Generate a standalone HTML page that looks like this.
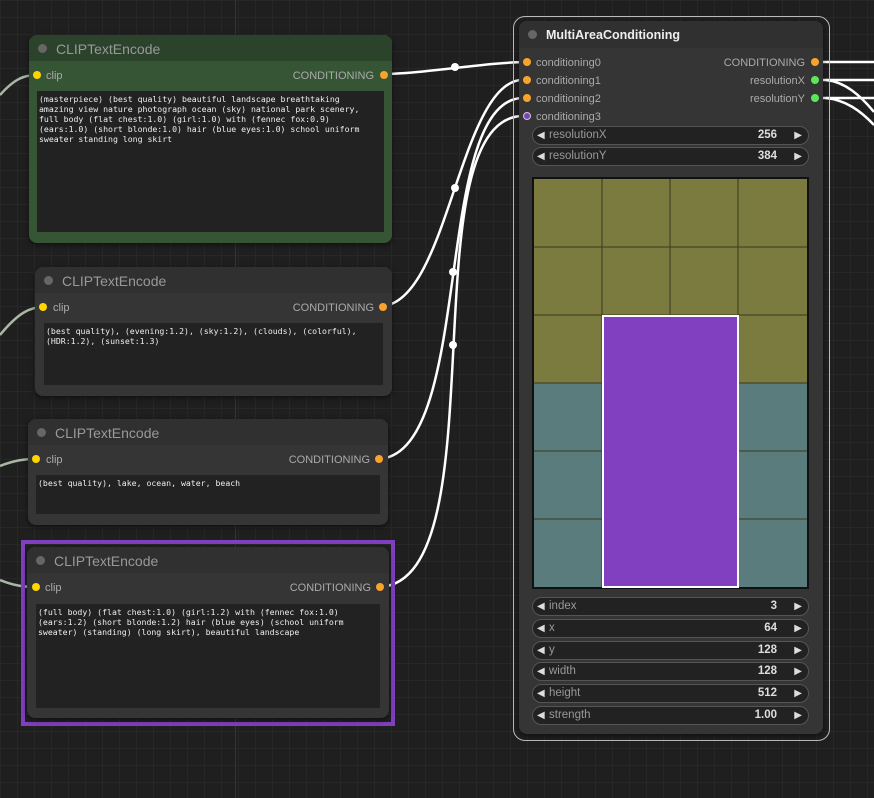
<!DOCTYPE html>
<html><head><meta charset="utf-8"><style>
*{margin:0;padding:0;box-sizing:border-box}
body{width:874px;height:798px;overflow:hidden;position:relative;background:#1f1f1f;
background-image:linear-gradient(#272727 1px,transparent 1px),linear-gradient(90deg,#272727 1px,transparent 1px);
background-size:17px 17px;font-family:"Liberation Sans",Arial,sans-serif}
.abs{position:absolute}
.node{position:absolute;border-radius:8px;background:#353535;box-shadow:0 2px 6px rgba(0,0,0,.5)}
.title{position:absolute;left:0;right:0;top:0;height:26px;background:#303030;border-radius:8px 8px 0 0;color:#999;font-size:14px;line-height:28px;padding-left:27px}
.title:before{content:"";position:absolute;left:9px;top:9px;width:9px;height:9px;border-radius:50%;background:#666}
.slot{position:absolute;font-size:11px;color:#aaa;line-height:12px}
.dot{position:absolute;width:8px;height:8px;border-radius:50%}
.ta{position:absolute;background:#222;color:#eee;font-family:"DejaVu Sans Mono","Liberation Mono",monospace;font-size:8.2px;line-height:10px;padding:3px 2px;white-space:pre}
.w{position:absolute;left:13px;width:277px;height:19px;border:1px solid #555;border-radius:10px;background:#222;color:#999;font-size:11.5px;line-height:17px;padding-left:16px}
.w:before{content:"◀";position:absolute;left:4px;color:#ddd;font-size:10px}
.w:after{content:"▶";position:absolute;right:6px;top:0;color:#ddd;font-size:10px}
.w b{position:absolute;right:31px;color:#ddd;font-weight:bold}
</style></head><body>
<div class="abs" style="left:235px;top:0;width:1px;height:798px;background:#2a3260"></div>

<svg class="abs" style="left:0;top:0" width="874" height="798">
<g fill="none" stroke="#a9b7a5" stroke-width="2.5">
<path d="M0,95 C15,78 25,75 37,75"/>
<path d="M0,335 C18,313 30,307 43,307"/>
<path d="M0,466 C15,460 25,459 36,459"/>
<path d="M0,580 C15,586 25,587 36,587"/>
</g>
<g fill="none" stroke="#fff" stroke-width="2.5">
<path d="M383,74 C420,74 490,62 527,62"/>
<path d="M383,306 C450,300 460,72 527,80"/>
<path d="M380,459 C477,450 430,90 527,98"/>
<path d="M380,587 C503,580 404,108 527,116"/>
<path d="M815,62 L874,62"/>
<path d="M815,80 L874,80"/>
<path d="M815,98 L874,98"/>
<path d="M826,80 C845,82 860,95 874,112"/>
<path d="M826,98 C845,100 860,110 874,125"/>
</g>
<g fill="#fff"><circle cx="455" cy="67" r="4"/><circle cx="455" cy="188" r="4"/><circle cx="453" cy="272" r="4"/><circle cx="453" cy="345" r="4"/></g>
</svg>

<div class="node" style="left:29px;top:35px;width:363px;height:208px;background:#355535">
<div class="title" style="background:#2b422b">CLIPTextEncode</div>
<div class="dot" style="left:4px;top:36px;background:#ffd500"></div>
<div class="slot" style="left:17px;top:35px">clip</div>
<div class="slot" style="right:18px;top:35px">CONDITIONING</div>
<div class="dot" style="right:4px;top:36px;background:#f9a32c"></div>
<div class="ta" style="left:8px;top:56px;width:347px;height:141px">(masterpiece) (best quality) beautiful landscape breathtaking
amazing view nature photograph ocean (sky) national park scenery,
full body (flat chest:1.0) (girl:1.0) with (fennec fox:0.9)
(ears:1.0) (short blonde:1.0) hair (blue eyes:1.0) school uniform
sweater standing long skirt</div>
</div>

<div class="node" style="left:35px;top:267px;width:357px;height:129px">
<div class="title">CLIPTextEncode</div>
<div class="dot" style="left:4px;top:36px;background:#ffd500"></div>
<div class="slot" style="left:18px;top:35px">clip</div>
<div class="slot" style="right:18px;top:35px">CONDITIONING</div>
<div class="dot" style="right:5px;top:36px;background:#f9a32c"></div>
<div class="ta" style="left:9px;top:56px;width:339px;height:62px">(best quality), (evening:1.2), (sky:1.2), (clouds), (colorful),
(HDR:1.2), (sunset:1.3)</div>
</div>

<div class="node" style="left:28px;top:419px;width:360px;height:106px">
<div class="title">CLIPTextEncode</div>
<div class="dot" style="left:4px;top:36px;background:#ffd500"></div>
<div class="slot" style="left:18px;top:35px">clip</div>
<div class="slot" style="right:18px;top:35px">CONDITIONING</div>
<div class="dot" style="right:5px;top:36px;background:#f9a32c"></div>
<div class="ta" style="left:8px;top:56px;width:344px;height:39px">(best quality), lake, ocean, water, beach</div>
</div>

<div class="abs" style="left:21px;top:540px;width:374px;height:186px;border:4px solid #7f3fbf"></div>
<div class="node" style="left:27px;top:547px;width:362px;height:171px">
<div class="title">CLIPTextEncode</div>
<div class="dot" style="left:5px;top:36px;background:#ffd500"></div>
<div class="slot" style="left:18px;top:35px">clip</div>
<div class="slot" style="right:18px;top:35px">CONDITIONING</div>
<div class="dot" style="right:5px;top:36px;background:#f9a32c"></div>
<div class="ta" style="left:9px;top:57px;width:344px;height:104px">(full body) (flat chest:1.0) (girl:1.2) with (fennec fox:1.0)
(ears:1.2) (short blonde:1.2) hair (blue eyes) (school uniform
sweater) (standing) (long skirt), beautiful landscape</div>
</div>

<div class="abs" style="left:513px;top:16px;width:317px;height:725px;border:1.5px solid #bbb;border-radius:12px"></div>
<div class="node" style="left:519px;top:21px;width:304px;height:713px">
<div class="title" style="color:#eee;font-weight:bold;font-size:12.5px;height:27px;line-height:28px">MultiAreaConditioning</div>
<div class="dot" style="left:4px;top:37px;background:#f9a32c"></div>
<div class="dot" style="left:4px;top:55px;background:#f9a32c"></div>
<div class="dot" style="left:4px;top:73px;background:#f9a32c"></div>
<div class="dot" style="left:4px;top:91px;background:#7f3fbf;border:1.5px solid #ccc"></div>
<div class="slot" style="left:17px;top:36px">conditioning0</div>
<div class="slot" style="left:17px;top:54px">conditioning1</div>
<div class="slot" style="left:17px;top:72px">conditioning2</div>
<div class="slot" style="left:17px;top:90px">conditioning3</div>
<div class="slot" style="right:18px;top:36px">CONDITIONING</div>
<div class="slot" style="right:18px;top:54px">resolutionX</div>
<div class="slot" style="right:18px;top:72px">resolutionY</div>
<div class="dot" style="right:4px;top:37px;background:#f9a32c"></div>
<div class="dot" style="right:4px;top:55px;background:#5ce65c"></div>
<div class="dot" style="right:4px;top:73px;background:#5ce65c"></div>
<div class="w" style="top:105px">resolutionX<b>256</b></div>
<div class="w" style="top:126px">resolutionY<b>384</b></div>
<svg class="abs" style="left:13px;top:156px" width="277" height="412">
<rect x="0" y="0" width="277" height="412" fill="#111"/>
<rect x="2" y="2" width="273" height="204" fill="#7b7b3f"/>
<rect x="2" y="206" width="273" height="204" fill="#5a7c7c"/>
<g stroke="#3a3a20" stroke-width="1">
<path d="M70,2V410M138,2V410M206,2V410M2,70H275M2,138H275M2,206H275M2,274H275M2,342H275"/>
</g>
<rect x="71" y="139" width="135" height="271" fill="#8040c0" stroke="#fff" stroke-width="2"/>
</svg>
<div class="w" style="top:576px">index<b>3</b></div>
<div class="w" style="top:598px">x<b>64</b></div>
<div class="w" style="top:620px">y<b>128</b></div>
<div class="w" style="top:641px">width<b>128</b></div>
<div class="w" style="top:663px">height<b>512</b></div>
<div class="w" style="top:685px">strength<b>1.00</b></div>
</div>
</body></html>
